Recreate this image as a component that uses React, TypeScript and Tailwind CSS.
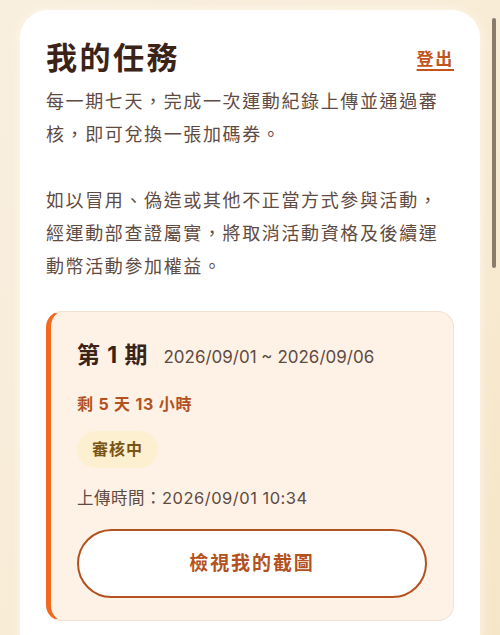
import React from "react";

const FONT = "font-['Inter','Noto_Sans_CJK_TC',sans-serif]";

export default function App() {
  return (
    <div
      className={`relative h-[635px] w-[500px] overflow-hidden bg-gradient-to-br from-[#f9efdf] via-[#f8ecd6] to-[#f6e6c8] ${FONT}`}
    >
      <div className="px-5 pt-[10px]">
        {/* Main card */}
        <div className="rounded-[28px] bg-white px-[26px] pt-[30px] pb-10 shadow-[0_0_12px_rgba(255,250,240,0.8)]">
          <div className="flex items-center justify-between">
            <h1 className="text-[31px] font-bold leading-[36px] tracking-[0.08em] text-[#3b2318]">
              我的任務
            </h1>
            <a
              href="#"
              className="mt-[4px] text-[17px] font-bold tracking-[0.1em] text-[#c2541b] underline underline-offset-[4px] decoration-[2px]"
            >
              登出
            </a>
          </div>

          <div className="mt-[9px] text-[18px] leading-[33px] tracking-[0.09em] text-[#5f4b42]">
            <p>每一期七天，完成一次運動紀錄上傳並通過審核，即可兌換一張加碼券。</p>
            <p className="mt-[33px]">
              如以冒用、偽造或其他不正當方式參與活動，經運動部查證屬實，將取消活動資格及後續運動幣活動參加權益。
            </p>
          </div>

          {/* Period card */}
          <div className="mt-[28px] rounded-[16px] border border-[#f2e0d1] border-l-[5px] border-l-[#f26a1f] bg-[#fef2e6] pl-[26px] pr-[26px] pt-[28px] pb-[22px]">
            <div className="flex items-baseline gap-[15px]">
              <span className="text-[23px] font-bold leading-[30px] tracking-[0.04em] text-[#3b2318]">
                第 1 期
              </span>
              <span className="text-[17px] text-[#5f4b42]">2026/09/01 ~ 2026/09/06</span>
            </div>

            <p className="mt-[21px] text-[16px] font-bold tracking-[0.05em] text-[#b3511f]">
              剩 5 天 13 小時
            </p>

            <div className="mt-[15px]">
              <span className="inline-flex h-[37px] items-center rounded-full bg-[#fdf0d0] px-[15px] text-[16px] font-bold tracking-[0.06em] text-[#7c5414]">
                審核中
              </span>
            </div>

            <p className="mt-[18px] text-[16.5px] tracking-[0.03em] text-[#5f4b42]">
              上傳時間：2026/09/01 10:34
            </p>

            <button className="mt-[19px] flex h-[69px] w-full items-center justify-center rounded-full border-[2.5px] border-[#b3511f] bg-white text-[19px] font-bold tracking-[0.1em] text-[#b3511f]">
              檢視我的截圖
            </button>
          </div>
        </div>
      </div>

      {/* overlay scrollbar */}
      <div className="absolute right-[4px] top-[18px] h-[250px] w-[4px] rounded-full bg-[#8a7b6c]" />
    </div>
  );
}
